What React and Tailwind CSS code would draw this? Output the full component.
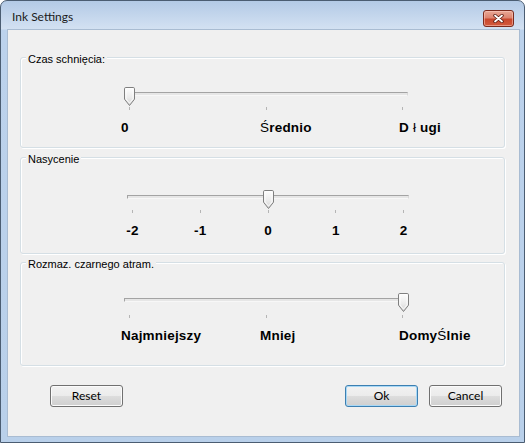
import React from 'react';

const uiFont = "font-[family-name:Lato,'Noto_Sans',sans-serif]";
const groupFont = "font-[family-name:'Liberation_Sans',Arial,sans-serif] text-[11px] leading-[12px] text-black";
const scaleFont = "font-[family-name:'Liberation_Sans',Arial,sans-serif] text-[13.5px] leading-[14px] font-bold tracking-[0.2px] text-black";

// trackbar thumb, pointing down
function Thumb({ id }) {
  return (
    <svg width="11" height="19" viewBox="0 0 11 19" className="block">
      <defs>
        <linearGradient id={id} x1="0" y1="0" x2="0" y2="1">
          <stop offset="0" stopColor="#fefefe" />
          <stop offset="0.55" stopColor="#ececec" />
          <stop offset="1" stopColor="#d2d2d2" />
        </linearGradient>
      </defs>
      <path d="M1.8 0.5h7.4a1.3 1.3 0 0 1 1.3 1.3v10.4l-5 6.3l-5-6.3v-10.4a1.3 1.3 0 0 1 1.3-1.3z" fill={`url(#${id})`} stroke="#7f7f7f" />
      <path d="M2 1.6h7v10.2l-3.5 4.4l-3.5-4.4z" fill="none" stroke="#ffffff" strokeOpacity="0.8" />
    </svg>
  );
}

function Slider({ id, left, width, count, value, tickMt = 'mt-[1px]', labels, centered }) {
  const step = (width - 10) / (count - 1);
  return (
    <div className="flex flex-col" style={{ marginLeft: left, width }}>
      <div className="relative h-[19px]">
        <div className="mt-[5px] h-[4px] border border-t-[#a3a3a3] border-l-[#a3a3a3] border-b-[#f7f7f7] border-r-[#d8d8d8] bg-[#e6e6e6]" />
        <div className="absolute top-0" style={{ left: value * step }}>
          <Thumb id={id} />
        </div>
      </div>
      <div className={`${tickMt} flex h-[3px] justify-between px-[5px]`}>
        {Array.from({ length: count }).map((_, i) => (
          <div key={i} className="h-[3px] w-px bg-[#b5b5b5]" />
        ))}
      </div>
      {centered ? (
        <div className={`${scaleFont} mt-[11px] flex justify-between px-[5px]`}>
          {labels.map((l, i) => (
            <div key={i} className="flex w-px justify-center whitespace-nowrap">{l}</div>
          ))}
        </div>
      ) : (
        <div className={`${scaleFont} mt-[11px] -ml-[3px] flex`}>
          {labels.map((l, i) => (
            <div key={i} className="w-[139px] shrink-0 whitespace-nowrap">{l}</div>
          ))}
        </div>
      )}
    </div>
  );
}

function Group({ title, className, children }) {
  return (
    <div className={`relative rounded-[3px] border border-[#d5dfe5] shadow-[inset_1px_1px_0_#ffffff,1px_1px_0_#ffffff] ${className}`}>
      <div className={`${groupFont} absolute -top-[5px] left-[5px] bg-[#f0f0f0] px-[2px]`}>{title}</div>
      {children}
    </div>
  );
}

function Button({ children, primary }) {
  return (
    <button
      type="button"
      className={`${uiFont} flex h-[22px] w-[73px] items-center justify-center rounded-[3px] border text-[12px] text-black bg-[linear-gradient(#f2f2f2_0%,#ebebeb_50%,#dddddd_50%,#cfcfcf_100%)] ${
        primary
          ? 'border-[#3c7fb1] shadow-[inset_0_0_0_1px_#a8d8f6]'
          : 'border-[#707070] shadow-[inset_0_0_0_1px_#fbfbfb]'
      }`}
    >
      {children}
    </button>
  );
}

export default function App() {
  const thin = 'font-normal';
  return (
    <div className="h-[443px] w-[525px] bg-white">
      <div className="flex h-full w-full flex-col rounded-t-[7px] border border-[#4b5d72] bg-[linear-gradient(#b3cae6_0px,#d3e1f2_28px,#bcd2ec_29px,#b9d0ea_100%)]">
        {/* Title bar */}
        <div className="flex h-[28px] shrink-0 items-start pl-[11px] pr-[10px] pt-[8px]">
          <span className={`${uiFont} text-[12px] leading-[15px] text-[#1b1b1b]`}>Ink Settings</span>
          <div className="flex-1" />
          <div className="mt-[1px] flex h-[17px] w-[31px] items-center justify-center rounded-[3px] border border-[#7b2a1d] bg-[linear-gradient(#e9a896_0%,#dd8470_45%,#c9472d_55%,#d35a3c_100%)] shadow-[inset_0_0_0_1px_rgba(255,210,200,0.5)]">
            <svg width="11" height="9" viewBox="0 0 11 9">
              <path d="M2 1.5l7 6M9 1.5l-7 6" stroke="#5b1a10" strokeWidth="3.4" strokeLinecap="round" />
              <path d="M2 1.5l7 6M9 1.5l-7 6" stroke="#ffffff" strokeWidth="1.8" strokeLinecap="round" />
            </svg>
          </div>
        </div>

        {/* Client area */}
        <div className="mb-[5px] ml-[6px] mr-[4px] flex flex-1 flex-col border border-[#a9bcd2] bg-[#f0f0f0] pl-[12px] pr-[14px]">
          <Group title="Czas schnięcia:" className="mt-[27px] h-[91px] pt-[29px]">
            <Slider
              id="t1"
              left={103}
              width={284}
              count={3}
              value={0}
              labels={[
                '0',
                <><span className={thin}>Ś</span>rednio</>,
                <>D <span className={thin}>ł</span> ugi</>,
              ]}
            />
          </Group>

          <Group title="Nasycenie" className="mt-[9px] h-[97px] pt-[32px]">
            <Slider
              id="t2"
              left={106}
              width={282}
              count={5}
              value={2}
              centered
              labels={['-2', '-1', '0', '1', '2']}
            />
          </Group>

          <Group title="Rozmaz. czarnego atram." className="mt-[8px] h-[104px] pt-[30px]">
            <Slider
              id="t3"
              left={103}
              width={284}
              count={3}
              value={2}
              tickMt="mt-[3px]"
              labels={[
                'Najmniejszy',
                'Mniej',
                <>Domy<span className={thin}>Ś</span>lnie</>,
              ]}
            />
          </Group>

          <div className="mt-[19px] flex items-center pr-[3px] pl-[30px]">
            <Button>Reset</Button>
            <div className="flex-1" />
            <Button primary>Ok</Button>
            <div className="w-[11px]" />
            <Button>Cancel</Button>
          </div>
        </div>
      </div>
    </div>
  );
}
